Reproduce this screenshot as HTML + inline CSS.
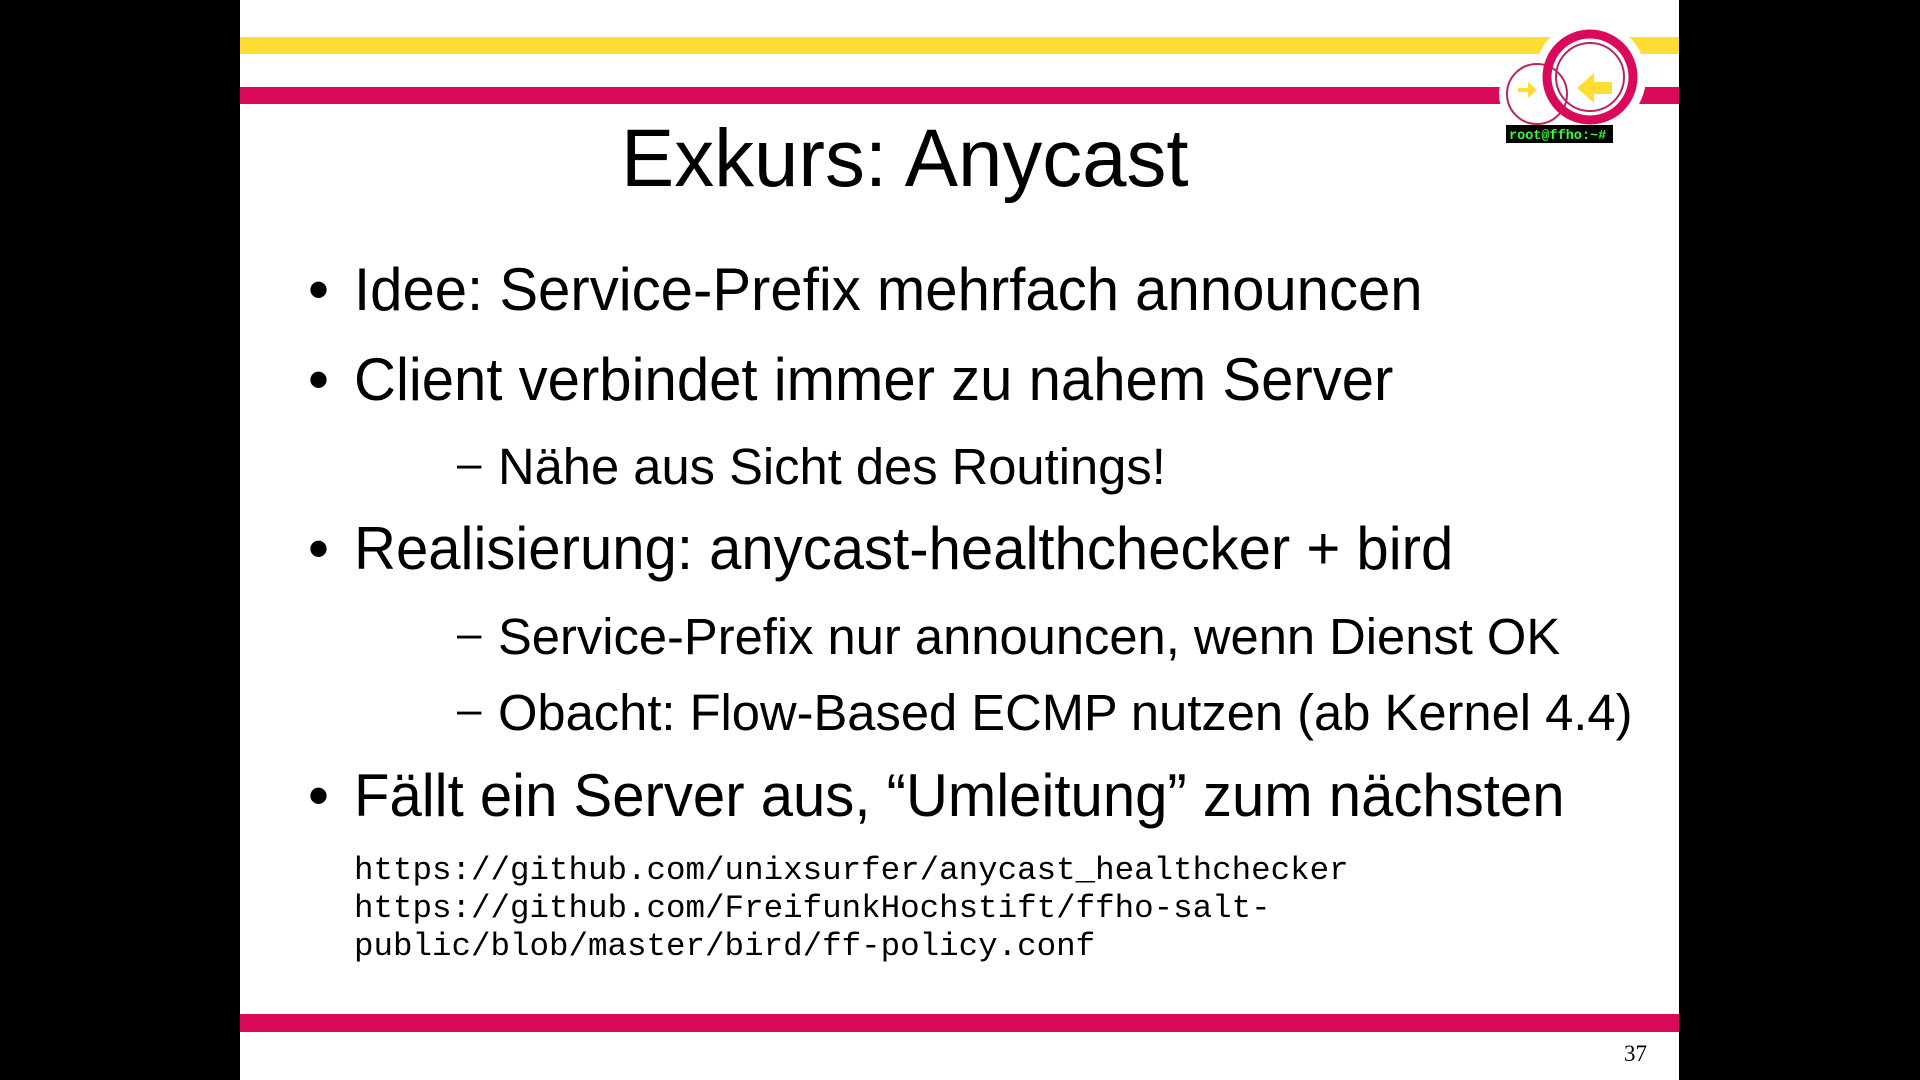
<!DOCTYPE html>
<html><head><meta charset="utf-8"><style>
html,body{margin:0;padding:0;background:#000;width:1920px;height:1080px;overflow:hidden}
#s{position:absolute;left:240px;top:0;width:1439px;height:1080px;background:#fff;overflow:hidden}
.t{position:absolute;white-space:nowrap;font-family:"Liberation Sans",sans-serif;color:#000;line-height:1;transform-origin:0 0}
.b{transform:scaleX(0.968)}
.m{position:absolute;white-space:nowrap;font-family:"Liberation Mono",monospace;color:#000;font-size:32.5px;line-height:1}
</style></head><body>
<div id="s">
<svg width="1439" height="1080" style="position:absolute;left:0;top:0">
<rect x="0" y="37" width="1439" height="17" fill="#ffdd33"/>
<rect x="0" y="87" width="1439" height="17" fill="#d90a5b"/>
<rect x="0" y="1014" width="1439" height="18" fill="#d90a5b"/>
<circle cx="1350" cy="77" r="56" fill="#fff"/>
<circle cx="1297" cy="94" r="38" fill="#fff"/>
<circle cx="1297" cy="94" r="30" fill="#fff" stroke="#b8265e" stroke-width="2"/>
<circle cx="1350" cy="77" r="43" fill="none" stroke="#d90a5b" stroke-width="9"/>
<circle cx="1350" cy="77" r="34" fill="none" stroke="#b8265e" stroke-width="2"/>
<path d="M1278 88h10v-6l9 8-9 8v-6h-10z" fill="#ffdd33"/>
<path d="M1372 82h-18v-9l-17 15 17 15v-9h18z" fill="#ffdd33"/>
<rect x="1266" y="125" width="107" height="18" fill="#000"/>
<text x="1269" y="139" font-family="Liberation Mono,monospace" font-weight="bold" font-size="13.5" fill="#3f3">root@ffho:~#</text>
</svg>
<div class="t b" style="left:381px;top:118px;font-size:82px;transform:scaleX(0.973)">Exkurs: Anycast</div>
<div class="t" style="left:68px;top:260px;font-size:60px">•</div>
<div class="t b" style="left:114px;top:260px;font-size:60px">Idee: Service-Prefix mehrfach announcen</div>
<div class="t" style="left:68px;top:350px;font-size:60px">•</div>
<div class="t b" style="left:114px;top:350px;font-size:60px">Client verbindet immer zu nahem Server</div>
<div class="t" style="left:217px;top:442px;font-size:44px">–</div>
<div class="t" style="left:258px;top:442px;font-size:50.7px">Nähe aus Sicht des Routings!</div>
<div class="t" style="left:68px;top:519px;font-size:60px">•</div>
<div class="t b" style="left:114px;top:519px;font-size:60px">Realisierung: anycast-healthchecker + bird</div>
<div class="t" style="left:217px;top:612px;font-size:44px">–</div>
<div class="t" style="left:258px;top:612px;font-size:50.7px">Service-Prefix nur announcen, wenn Dienst OK</div>
<div class="t" style="left:217px;top:688px;font-size:44px">–</div>
<div class="t" style="left:258px;top:688px;font-size:50.7px">Obacht: Flow-Based ECMP nutzen (ab Kernel 4.4)</div>
<div class="t" style="left:68px;top:766px;font-size:60px">•</div>
<div class="t b" style="left:114px;top:766px;font-size:60px">Fällt ein Server aus, “Umleitung” zum nächsten</div>
<div class="m" style="left:114px;top:855px">https://github.com/unixsurfer/anycast_healthchecker</div>
<div class="m" style="left:114px;top:893px">https://github.com/FreifunkHochstift/ffho-salt-</div>
<div class="m" style="left:114px;top:931px">public/blob/master/bird/ff-policy.conf</div>
<div class="t" style="left:1384px;top:1042px;font-size:23px;font-family:'Liberation Serif',serif">37</div>
</div>
</body></html>
